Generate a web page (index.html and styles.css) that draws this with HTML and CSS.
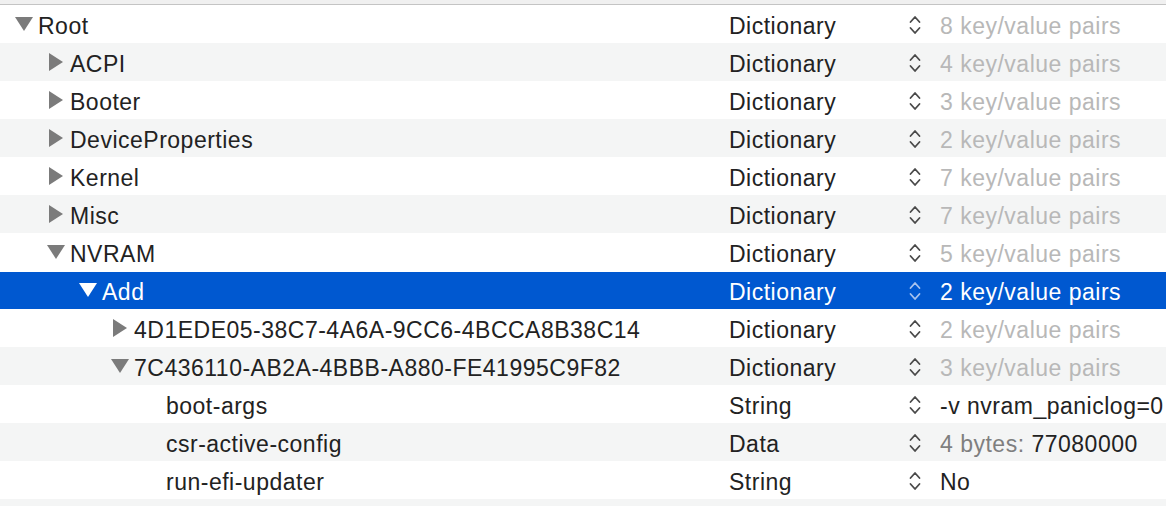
FILE: index.html
```html
<!DOCTYPE html>
<html>
<head>
<meta charset="utf-8">
<link rel="stylesheet" href="styles.css">
</head>
<body>
<div class="topband"></div>
<div class="outline">
  <div class="row">
    <div class="key lvl0"><span class="disc"><svg class="down" width="18" height="14" viewBox="0 0 18 14"><polygon points="0,0 18,0 9,14"/></svg></span><span class="txt">Root</span></div>
    <div class="type">Dictionary</div>
    <div class="step"><svg width="12" height="22" viewBox="0 0 12 22"><polyline points="1.5,8 6,3 10.5,8"/><polyline points="1.5,14 6,19 10.5,14"/></svg></div>
    <div class="val muted">8 key/value pairs</div>
  </div>
  <div class="row">
    <div class="key lvl1"><span class="disc"><svg class="right" width="14" height="18" viewBox="0 0 14 18"><polygon points="0,0 14,9 0,18"/></svg></span><span class="txt">ACPI</span></div>
    <div class="type">Dictionary</div>
    <div class="step"><svg width="12" height="22" viewBox="0 0 12 22"><polyline points="1.5,8 6,3 10.5,8"/><polyline points="1.5,14 6,19 10.5,14"/></svg></div>
    <div class="val muted">4 key/value pairs</div>
  </div>
  <div class="row">
    <div class="key lvl1"><span class="disc"><svg class="right" width="14" height="18" viewBox="0 0 14 18"><polygon points="0,0 14,9 0,18"/></svg></span><span class="txt">Booter</span></div>
    <div class="type">Dictionary</div>
    <div class="step"><svg width="12" height="22" viewBox="0 0 12 22"><polyline points="1.5,8 6,3 10.5,8"/><polyline points="1.5,14 6,19 10.5,14"/></svg></div>
    <div class="val muted">3 key/value pairs</div>
  </div>
  <div class="row">
    <div class="key lvl1"><span class="disc"><svg class="right" width="14" height="18" viewBox="0 0 14 18"><polygon points="0,0 14,9 0,18"/></svg></span><span class="txt">DeviceProperties</span></div>
    <div class="type">Dictionary</div>
    <div class="step"><svg width="12" height="22" viewBox="0 0 12 22"><polyline points="1.5,8 6,3 10.5,8"/><polyline points="1.5,14 6,19 10.5,14"/></svg></div>
    <div class="val muted">2 key/value pairs</div>
  </div>
  <div class="row">
    <div class="key lvl1"><span class="disc"><svg class="right" width="14" height="18" viewBox="0 0 14 18"><polygon points="0,0 14,9 0,18"/></svg></span><span class="txt">Kernel</span></div>
    <div class="type">Dictionary</div>
    <div class="step"><svg width="12" height="22" viewBox="0 0 12 22"><polyline points="1.5,8 6,3 10.5,8"/><polyline points="1.5,14 6,19 10.5,14"/></svg></div>
    <div class="val muted">7 key/value pairs</div>
  </div>
  <div class="row">
    <div class="key lvl1"><span class="disc"><svg class="right" width="14" height="18" viewBox="0 0 14 18"><polygon points="0,0 14,9 0,18"/></svg></span><span class="txt">Misc</span></div>
    <div class="type">Dictionary</div>
    <div class="step"><svg width="12" height="22" viewBox="0 0 12 22"><polyline points="1.5,8 6,3 10.5,8"/><polyline points="1.5,14 6,19 10.5,14"/></svg></div>
    <div class="val muted">7 key/value pairs</div>
  </div>
  <div class="row">
    <div class="key lvl1"><span class="disc"><svg class="down" width="18" height="14" viewBox="0 0 18 14"><polygon points="0,0 18,0 9,14"/></svg></span><span class="txt">NVRAM</span></div>
    <div class="type">Dictionary</div>
    <div class="step"><svg width="12" height="22" viewBox="0 0 12 22"><polyline points="1.5,8 6,3 10.5,8"/><polyline points="1.5,14 6,19 10.5,14"/></svg></div>
    <div class="val muted">5 key/value pairs</div>
  </div>
  <div class="row selected">
    <div class="key lvl2"><span class="disc"><svg class="down" width="18" height="14" viewBox="0 0 18 14"><polygon points="0,0 18,0 9,14"/></svg></span><span class="txt">Add</span></div>
    <div class="type">Dictionary</div>
    <div class="step"><svg width="12" height="22" viewBox="0 0 12 22"><polyline points="1.5,8 6,3 10.5,8"/><polyline points="1.5,14 6,19 10.5,14"/></svg></div>
    <div class="val">2 key/value pairs</div>
  </div>
  <div class="row">
    <div class="key lvl3"><span class="disc"><svg class="right" width="14" height="18" viewBox="0 0 14 18"><polygon points="0,0 14,9 0,18"/></svg></span><span class="txt">4D1EDE05-38C7-4A6A-9CC6-4BCCA8B38C14</span></div>
    <div class="type">Dictionary</div>
    <div class="step"><svg width="12" height="22" viewBox="0 0 12 22"><polyline points="1.5,8 6,3 10.5,8"/><polyline points="1.5,14 6,19 10.5,14"/></svg></div>
    <div class="val muted">2 key/value pairs</div>
  </div>
  <div class="row">
    <div class="key lvl3"><span class="disc"><svg class="down" width="18" height="14" viewBox="0 0 18 14"><polygon points="0,0 18,0 9,14"/></svg></span><span class="txt">7C436110-AB2A-4BBB-A880-FE41995C9F82</span></div>
    <div class="type">Dictionary</div>
    <div class="step"><svg width="12" height="22" viewBox="0 0 12 22"><polyline points="1.5,8 6,3 10.5,8"/><polyline points="1.5,14 6,19 10.5,14"/></svg></div>
    <div class="val muted">3 key/value pairs</div>
  </div>
  <div class="row">
    <div class="key lvl4"><span class="disc"></span><span class="txt">boot-args</span></div>
    <div class="type">String</div>
    <div class="step"><svg width="12" height="22" viewBox="0 0 12 22"><polyline points="1.5,8 6,3 10.5,8"/><polyline points="1.5,14 6,19 10.5,14"/></svg></div>
    <div class="val">-v nvram_paniclog=0</div>
  </div>
  <div class="row">
    <div class="key lvl4"><span class="disc"></span><span class="txt">csr-active-config</span></div>
    <div class="type">Data</div>
    <div class="step"><svg width="12" height="22" viewBox="0 0 12 22"><polyline points="1.5,8 6,3 10.5,8"/><polyline points="1.5,14 6,19 10.5,14"/></svg></div>
    <div class="val"><span class="dim">4 bytes:</span> 77080000</div>
  </div>
  <div class="row">
    <div class="key lvl4"><span class="disc"></span><span class="txt">run-efi-updater</span></div>
    <div class="type">String</div>
    <div class="step"><svg width="12" height="22" viewBox="0 0 12 22"><polyline points="1.5,8 6,3 10.5,8"/><polyline points="1.5,14 6,19 10.5,14"/></svg></div>
    <div class="val">No</div>
  </div>
  <div class="row filler"></div>
</div>
</body>
</html>
```
FILE: styles.css
```css
html, body {
  margin: 0;
  padding: 0;
  background: #ffffff;
}
body {
  font-family: "Liberation Sans", Arial, sans-serif;
  font-size: 23px;
  letter-spacing: 0.5px;
  color: #222222;
  overflow: hidden;
  width: 1166px;
  height: 506px;
}
.topband {
  height: 4px;
  background: #f0f0f0;
  border-bottom: 1px solid #c4c4c4;
}
.outline {
  display: flex;
  flex-direction: column;
}
.row {
  height: 38px;
  flex: 0 0 38px;
  display: grid;
  grid-template-columns: 729px 180px 31px 1fr;
  align-items: center;
  white-space: nowrap;
}
.row.filler {
  height: 7px;
  flex: 0 0 7px;
}
.row:nth-child(even) {
  background: #f4f5f5;
}
.row.selected {
  background: #0058d0;
  color: #ffffff;
  box-shadow: inset 0 1px 0 #ffffff;
}
.key {
  display: flex;
  align-items: center;
}
.txt, .type, .val {
  padding-top: 4px;
}
.lvl0 { padding-left: 15px; }
.lvl1 { padding-left: 47px; }
.lvl2 { padding-left: 79px; }
.lvl3 { padding-left: 111px; }
.lvl4 { padding-left: 143px; }
.disc {
  width: 23px;
  flex: 0 0 23px;
  display: flex;
  align-items: center;
}
.disc svg {
  fill: #7b7b7b;
  display: block;
}
.disc svg.right {
  margin-left: 2px;
}
.selected .disc svg {
  fill: #ffffff;
}
.step {
  display: flex;
  align-items: center;
  padding-top: 2px;
}
.step svg {
  display: block;
  fill: none;
  stroke: #4a4a4a;
  stroke-width: 1.8;
  stroke-linecap: round;
  stroke-linejoin: round;
}
.selected .step svg {
  stroke: #a8c3ee;
}
.val {
  overflow: hidden;
}
.val.muted {
  color: #b8b8b8;
}
.selected .val {
  color: #ffffff;
}
.dim {
  color: #7f7f7f;
}
```
